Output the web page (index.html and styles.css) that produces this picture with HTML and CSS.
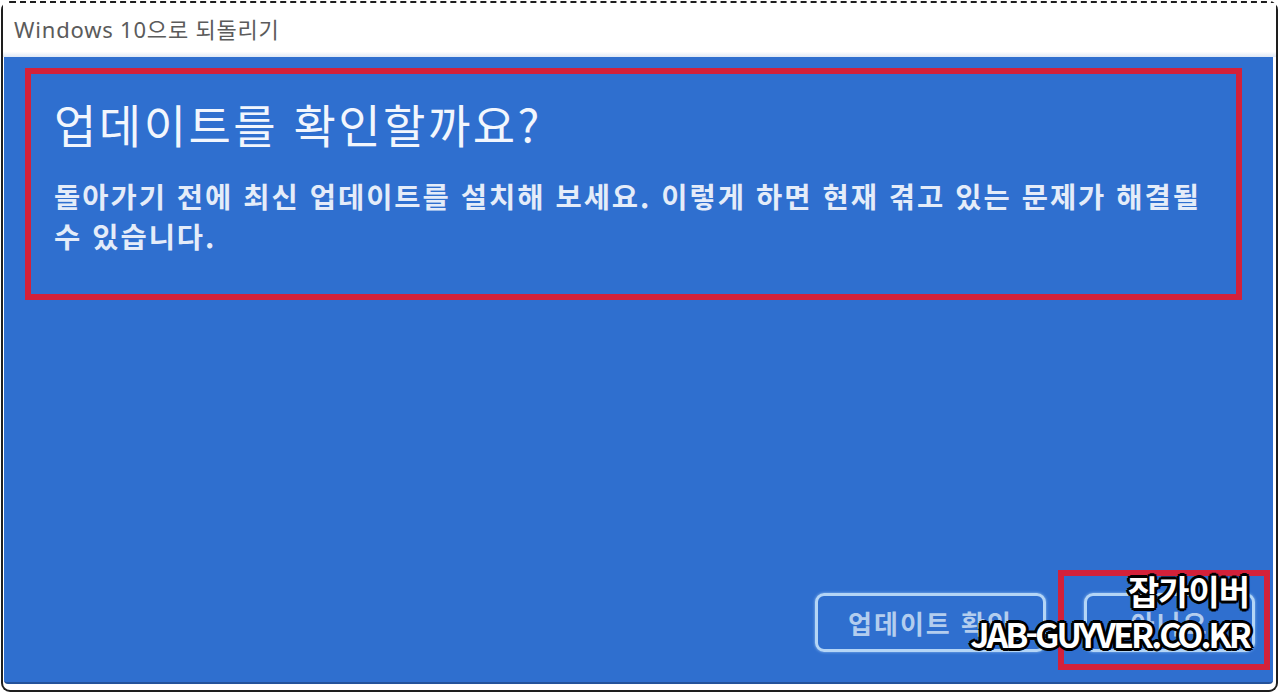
FILE: index.html
```html
<!DOCTYPE html>
<html lang="ko">
<head>
  <meta charset="UTF-8">
  <title>Windows 10으로 되돌리기</title>
  <link rel="stylesheet" href="styles.css">
</head>
<body>
  <div class="window">
    <div class="titlebar">Windows 10으로 되돌리기</div>
    <div class="content">
      <div class="highlight">
        <h1>업데이트를 확인할까요?</h1>
        <p>돌아가기 전에 최신 업데이트를 설치해 보세요. 이렇게 하면 현재 겪고 있는 문제가 해결될 수 있습니다.</p>
      </div>
      <div class="footer">
        <button class="btn">업데이트 확인</button>
        <button class="btn btn-no">아니요</button>
      </div>
    </div>
    <div class="mark-box"></div>
    <div class="watermark">
      <div class="wm-name">잡가이버</div>
      <div class="wm-url">JAB-GUYVER.CO.KR</div>
    </div>
  </div>
</body>
</html>
```

FILE: styles.css
```css
html, body {
  margin: 0;
  padding: 0;
  background: #fff;
}
.window {
  position: relative;
  box-sizing: border-box;
  margin: 1px 0 0 1px;
  width: 1277px;
  height: 691px;
  border: 2px solid #1e1e1e;
  border-top-style: dashed;
  border-radius: 9px;
  background: #fff;
  display: flex;
  flex-direction: column;
  font-family: "Noto Sans CJK KR", "Noto Sans", sans-serif;
}
.titlebar {
  box-sizing: border-box;
  height: 54px;
  padding: 0 0 5px 11px;
  display: flex;
  align-items: center;
  font-family: "Noto Sans", "Noto Sans CJK KR", sans-serif;
  font-size: 22px;
  letter-spacing: 0.8px;
  color: #5b5b5b;
  background: linear-gradient(#fff 90%, #dfe8f5);
}
.content {
  flex: 1;
  margin: 0 3px 6px 1px;
  background: #2f6fcf;
  border-bottom: 2px solid #24529a;
  border-radius: 0 0 4px 4px;
  display: flex;
  flex-direction: column;
  padding: 11px 0 0 21px;
}
.highlight {
  box-sizing: border-box;
  width: 1217px;
  height: 232px;
  border: 6px solid #d3213a;
  padding: 20px 24px 0 23px;
  color: #f2f6fd;
}
.highlight h1 {
  margin: 0;
  font-size: 46px;
  font-weight: 400;
  letter-spacing: 2.5px;
  line-height: 58px;
}
.highlight p {
  margin: 24px 0 0 0;
  width: 1150px;
  font-size: 28.5px;
  font-weight: 700;
  letter-spacing: 2px;
  line-height: 40px;
  color: #e4ecf9;
}
.footer {
  margin-top: auto;
  display: flex;
  justify-content: flex-end;
  gap: 38px;
  padding: 0 18px 30px 0;
}
.btn {
  box-sizing: border-box;
  width: 231px;
  height: 59px;
  background: transparent;
  border: 3px solid #b4d5f6;
  border-radius: 9px;
  box-shadow: 0 0 3px #8fbdf0;
  font-family: inherit;
  font-size: 26px;
  font-weight: 700;
  color: #b3cdee;
  letter-spacing: 2px;
}
.btn-no {
  width: 171px;
}
.mark-box {
  position: absolute;
  left: 1055px;
  top: 567px;
  width: 212px;
  height: 100px;
  box-sizing: border-box;
  border: 6px solid #d3213a;
}
.watermark {
  position: absolute;
  right: 27px;
  top: 564px;
  text-align: right;
  color: #fff;
  font-weight: 700;
  text-shadow: 2px 0 #000, -2px 0 #000, 0 2px #000, 0 -2px #000,
    2px 2px #000, -2px 2px #000, 2px -2px #000, -2px -2px #000,
    3px 0 #000, -3px 0 #000, 0 3px #000, 0 -3px #000;
}
.wm-name {
  font-size: 34px;
  line-height: 48px;
  letter-spacing: -1px;
}
.wm-url {
  font-size: 34px;
  line-height: 38px;
  letter-spacing: -3px;
}
```
